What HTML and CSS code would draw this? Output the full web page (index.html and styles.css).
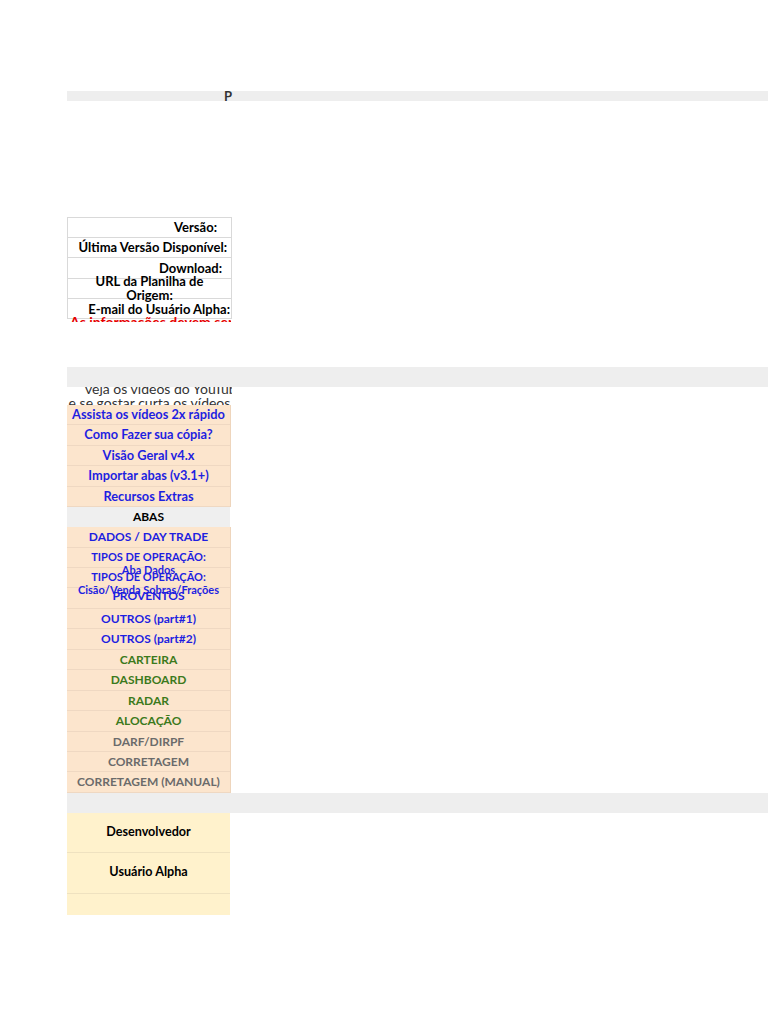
FILE: index.html
```html
<!DOCTYPE html>
<html lang="pt-BR">
<head>
<meta charset="utf-8">
<title>Planilha</title>
<link rel="stylesheet" href="styles.css">
</head>
<body>
<div class="sheet">
  <div class="bar bar-top"><span class="bar-title">P</span></div>

  <div class="info">
    <div class="info-row pr-14">Versão:</div>
    <div class="info-row pr-4">Última Versão Disponível:</div>
    <div class="info-row pr-9 bottom">Download:</div>
    <div class="info-row center two">
      <div class="two-lines">URL da Planilha de<br>Origem:</div>
    </div>
    <div class="info-row pr-2 low">E-mail do Usuário Alpha:</div>
  </div>
  <div class="warn"><span class="warn-text">As informações devem ser preenchidas</span></div>

  <div class="bar bar-mid"></div>

  <div class="yt">
    <div class="yt-line yt-first">veja os vídeos do YouTube</div>
    <div class="yt-line">e se gostar curta os vídeos</div>
  </div>

  <div class="peach">
    <div class="cell blue lc">Assista os vídeos 2x rápido</div>
    <div class="cell blue lc">Como Fazer sua cópia?</div>
    <div class="cell blue lc">Visão Geral v4.x</div>
    <div class="cell blue lc">Importar abas (v3.1+)</div>
    <div class="cell blue lc">Recursos Extras</div>
  </div>

  <div class="abas">ABAS</div>

  <div class="peach">
    <div class="cell blue">DADOS / DAY TRADE</div>
    <div class="cell blue small"><div class="two-small">TIPOS DE OPERAÇÃO:<br>Aba Dados</div></div>
    <div class="cell blue small"><div class="two-small">TIPOS DE OPERAÇÃO:<br>Cisão/Venda Sobras/Frações</div></div>
    <div class="cell blue up">PROVENTOS</div>
    <div class="cell blue">OUTROS (part#1)</div>
    <div class="cell blue">OUTROS (part#2)</div>
    <div class="cell green">CARTEIRA</div>
    <div class="cell green">DASHBOARD</div>
    <div class="cell green">RADAR</div>
    <div class="cell green">ALOCAÇÃO</div>
    <div class="cell gray">DARF/DIRPF</div>
    <div class="cell gray">CORRETAGEM</div>
    <div class="cell gray">CORRETAGEM (MANUAL)</div>
  </div>

  <div class="bar bar-low"></div>

  <div class="credits">
    <div class="credit tall">Desenvolvedor</div>
    <div class="credit tall">Usuário Alpha</div>
    <div class="credit short"></div>
  </div>
</div>
</body>
</html>
```

FILE: styles.css
```css
html, body {
  margin: 0;
  padding: 0;
  background: #ffffff;
}

body {
  font-family: Lato, "Liberation Sans", sans-serif;
  color: #000;
}

.sheet {
  padding: 91px 0 0 67px;
  width: 701px;
}

.bar {
  background: #eeeeee;
  position: relative;
}

.bar-top {
  height: 10px;
  overflow: hidden;
}

.bar-title {
  display: block;
  margin-left: 157px;
  margin-top: -1px;
  font-weight: 700;
  font-size: 13px;
  line-height: 13px;
  color: #333;
}

.bar-mid {
  height: 20px;
  margin-top: 45px;
}

.bar-low {
  height: 20px;
}

/* info table */
.info {
  margin-top: 116px;
  width: 163px;
  border: 1px solid #d9d9d9;
  border-bottom: none;
}

.info-row {
  display: flow-root;
  height: 20.2px;
  box-sizing: border-box;
  border-bottom: 1px solid #d9d9d9;
  text-align: right;
  font-weight: 700;
  font-size: 13px;
  line-height: 19px;
  white-space: nowrap;
  overflow: visible;
}

.info-row.bottom { line-height: 21px; }
.info-row.low { line-height: 21px; }
.pr-14 { padding-right: 14px; }
.pr-9 { padding-right: 9px; }
.pr-4 { padding-right: 4px; }
.pr-2 { padding-right: 1px; }

.info-row.center { text-align: center; }

.two-lines {
  line-height: 14px;
  margin-top: -5px;
  position: relative;
}

.warn {
  width: 164px;
  height: 6px;
  margin-top: -3px;
  overflow: hidden;
  position: relative;
}

.warn-text {
  display: block;
  margin-top: -1px;
  margin-left: 3px;
  white-space: nowrap;
  color: #e60000;
  font-weight: 700;
  font-size: 14px;
  line-height: 14px;
}

/* youtube cell */
.yt {
  width: 165px;
  height: 18px;
  overflow: hidden;
  color: #333;
  font-size: 14px;
}

.yt-line {
  line-height: 14px;
  white-space: nowrap;
  text-align: center;
}

.yt-first {
  text-align: left;
  padding-left: 18px;
  margin-top: -5px;
}

/* peach lists */
.peach {
  width: 163px;
  background: #fce5cd;
  border-right: 1px solid #eed5bc;
  position: relative;
}

.cell {
  height: 20.45px;
  box-sizing: border-box;
  border-bottom: 1px solid #efd8c2;
  text-align: center;
  font-weight: 700;
  font-size: 12px;
  line-height: 19px;
  white-space: nowrap;
}

.cell.lc { font-size: 12.8px; }

.cell.up { line-height: 16px; }

.cell.small {
  font-size: 11px;
  position: relative;
}

.two-small {
  padding-top: 2px;
  line-height: 13px;
}

.blue { color: #1f1fe0; }
.green { color: #3c7a1c; }
.gray { color: #6b6b6b; }

.abas {
  width: 163px;
  height: 20px;
  background: #efefef;
  text-align: center;
  font-weight: 700;
  font-size: 12px;
  line-height: 19px;
}

/* credits */
.credits {
  width: 163px;
  background: #fff2cc;
}

.credit {
  box-sizing: border-box;
  border-bottom: 1px solid #efe2c0;
  text-align: center;
  font-weight: 700;
  font-size: 12.6px;
}

.credit.tall {
  height: 40.5px;
  line-height: 38px;
}

.credit.short {
  height: 21px;
  border-bottom: none;
}
```
